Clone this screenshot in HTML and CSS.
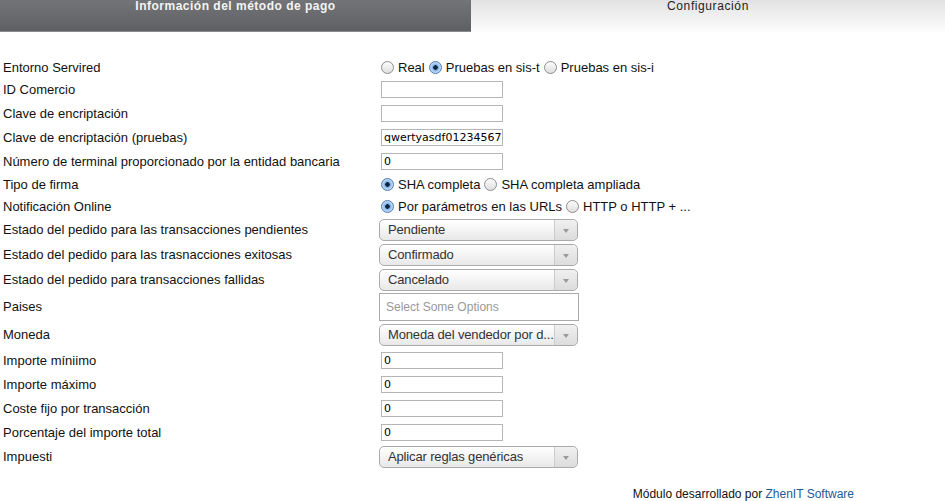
FILE: index.html
```html
<!DOCTYPE html>
<html lang="es">
<head>
<meta charset="utf-8">
<title>Configuración</title>
<link rel="stylesheet" href="styles.css">
</head>
<body>
<div class="tabs">
  <div class="tab tab-dark">Información del método de pago</div>
  <div class="tab tab-light">Configuración</div>
</div>

<form class="form">
  <div class="row h-radio">
    <div class="label">Entorno Servired</div>
    <div class="ctrl radios">
      <span class="radio"></span><span class="rlabel">Real</span>
      <span class="radio on"></span><span class="rlabel">Pruebas en sis-t</span>
      <span class="radio"></span><span class="rlabel">Pruebas en sis-i</span>
    </div>
  </div>
  <div class="row h-input1">
    <div class="label">ID Comercio</div>
    <div class="ctrl"><span class="text-input"></span></div>
  </div>
  <div class="row h-input">
    <div class="label">Clave de encriptación</div>
    <div class="ctrl"><span class="text-input"></span></div>
  </div>
  <div class="row h-input">
    <div class="label">Clave de encriptación (pruebas)</div>
    <div class="ctrl"><span class="text-input">qwertyasdf012345678</span></div>
  </div>
  <div class="row h-input">
    <div class="label">Número de terminal proporcionado por la entidad bancaria</div>
    <div class="ctrl"><span class="text-input">0</span></div>
  </div>
  <div class="row h-radio">
    <div class="label">Tipo de firma</div>
    <div class="ctrl radios">
      <span class="radio on"></span><span class="rlabel">SHA completa</span>
      <span class="radio"></span><span class="rlabel">SHA completa ampliada</span>
    </div>
  </div>
  <div class="row h-radio">
    <div class="label">Notificación Online</div>
    <div class="ctrl radios">
      <span class="radio on"></span><span class="rlabel">Por parámetros en las URLs</span>
      <span class="radio"></span><span class="rlabel">HTTP o HTTP + ...</span>
    </div>
  </div>
  <div class="row h-select1">
    <div class="label">Estado del pedido para las transacciones pendientes</div>
    <div class="ctrl"><span class="select"><span class="sel-text">Pendiente</span><span class="sel-arrow"></span></span></div>
  </div>
  <div class="row h-select">
    <div class="label">Estado del pedido para las trasnacciones exitosas</div>
    <div class="ctrl"><span class="select"><span class="sel-text">Confirmado</span><span class="sel-arrow"></span></span></div>
  </div>
  <div class="row h-select">
    <div class="label">Estado del pedido para transacciones fallidas</div>
    <div class="ctrl"><span class="select"><span class="sel-text">Cancelado</span><span class="sel-arrow"></span></span></div>
  </div>
  <div class="row h-multi">
    <div class="label">Paises</div>
    <div class="ctrl"><span class="multi">Select Some Options</span></div>
  </div>
  <div class="row h-moneda">
    <div class="label">Moneda</div>
    <div class="ctrl"><span class="select"><span class="sel-text">Moneda del vendedor por d...</span><span class="sel-arrow"></span></span></div>
  </div>
  <div class="row h-input">
    <div class="label">Importe míniimo</div>
    <div class="ctrl"><span class="text-input">0</span></div>
  </div>
  <div class="row h-input">
    <div class="label">Importe máximo</div>
    <div class="ctrl"><span class="text-input">0</span></div>
  </div>
  <div class="row h-input">
    <div class="label">Coste fijo por transacción</div>
    <div class="ctrl"><span class="text-input">0</span></div>
  </div>
  <div class="row h-input">
    <div class="label">Porcentaje del importe total</div>
    <div class="ctrl"><span class="text-input">0</span></div>
  </div>
  <div class="row h-select">
    <div class="label">Impuesti</div>
    <div class="ctrl"><span class="select"><span class="sel-text">Aplicar reglas genéricas</span><span class="sel-arrow"></span></span></div>
  </div>
</form>

<div class="footer">Módulo desarrollado por <a class="link" href="#">ZhenIT Software</a></div>
</body>
</html>
```

FILE: styles.css
```css
html, body {
  margin: 0;
  padding: 0;
  background: #fff;
}
body {
  font-family: "Liberation Sans", Arial, sans-serif;
  font-size: 13px;
  color: #111;
  width: 945px;
  height: 501px;
  overflow: hidden;
}

.tabs {
  display: flex;
  height: 32px;
}
.tab {
  font-family: "Liberation Sans", Arial, sans-serif;
  font-weight: bold;
  font-size: 12px;
  letter-spacing: 0.5px;
  text-align: center;
  line-height: 12px;
  padding-top: 0;
  box-sizing: border-box;
}
.tab-dark {
  width: 471px;
  color: #f4f4f4;
  background: linear-gradient(#737477, #5f6064);
  border-bottom: 1px solid #8a8b8e;
}
.tab-light {
  flex: 1;
  color: #222;
  font-weight: normal;
  letter-spacing: 0.6px;
  background: linear-gradient(#e2e2e2, #fdfdfd);
}

.form {
  margin-top: 24px;
  display: flex;
  flex-direction: column;
}
.row {
  display: flex;
  align-items: center;
}
.h-radio { height: 22px; }
.h-input1 { height: 23px; }
.h-input { height: 24px; }
.h-select1 { height: 25px; }
.h-select { height: 25px; }
.h-multi { height: 29px; }
.h-moneda { height: 27px; }

.label {
  width: 376px;
  padding-left: 3px;
  white-space: nowrap;
}
.ctrl {
  display: flex;
  align-items: center;
}

.radios {
  padding-left: 2px;
}
.radio {
  width: 11px;
  height: 11px;
  border-radius: 50%;
  border: 1px solid #8e8e8e;
  background: linear-gradient(#fdfdfd, #dedede);
  margin-right: 4px;
  box-sizing: content-box;
  display: inline-flex;
  align-items: center;
  justify-content: center;
}
.radio.on {
  border-color: #4b7bb5;
  background: radial-gradient(circle, #0d2440 0 2px, #7fb0e6 2.5px, #d2e5f8 6px);
}
.rlabel {
  margin-right: 4px;
  white-space: nowrap;
}

.text-input {
  display: block;
  width: 116px;
  height: 15px;
  margin-left: 2px;
  border: 1px solid #b5b5b5;
  padding: 0 2px;
  font-family: "DejaVu Sans", sans-serif;
  font-size: 11px;
  line-height: 15px;
  overflow: hidden;
  white-space: nowrap;
  color: #000;
  background: #fff;
}

.select {
  display: flex;
  width: 197px;
  height: 20px;
  border: 1px solid #aaa;
  border-radius: 5px;
  background: linear-gradient(#ffffff, #f4f4f4 50%, #e8e8e8);
}
.sel-text {
  flex: 1;
  min-width: 0;
  padding-left: 8px;
  line-height: 20px;
  color: #333;
  letter-spacing: -0.15px;
  white-space: nowrap;
}
.sel-arrow {
  width: 22px;
  flex: none;
  border-left: 1px solid #ccc;
  border-radius: 0 5px 5px 0;
  background: linear-gradient(#f0f0f0, #dcdcdc);
  position: relative;
}
.sel-arrow::after {
  content: "";
  position: absolute;
  left: 8px;
  top: 9px;
  border-left: 3px solid transparent;
  border-right: 3px solid transparent;
  border-top: 4px solid #9a9a9a;
}

.multi {
  display: block;
  width: 192px;
  height: 26px;
  border: 1px solid #aaa;
  padding-left: 6px;
  line-height: 26px;
  color: #999;
  font-size: 12px;
  background: #fff;
}

.footer {
  margin-top: 18px;
  text-align: right;
  padding-right: 91px;
  font-size: 12px;
  color: #111;
}
.link {
  color: #1e5b93;
  text-decoration: none;
}
```
